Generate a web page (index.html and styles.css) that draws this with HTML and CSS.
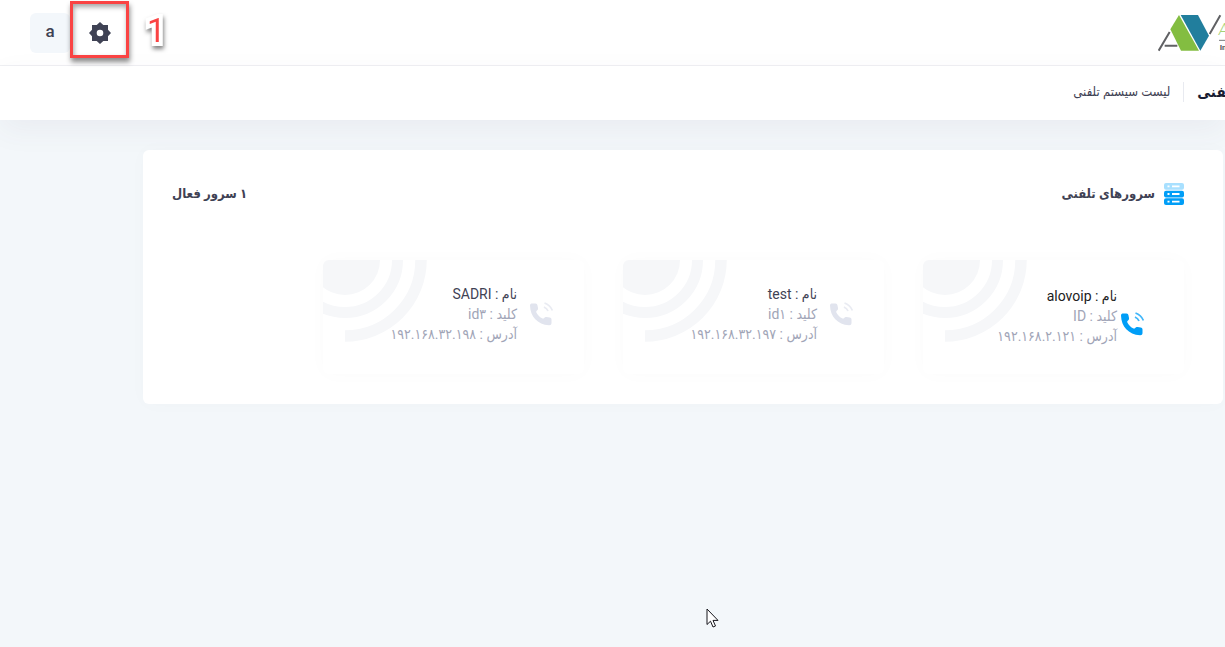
FILE: index.html
```html
<!DOCTYPE html>
<html lang="fa" dir="rtl">
<head>
<meta charset="utf-8">
<title>لیست سیستم تلفنی</title>
<link rel="stylesheet" href="styles.css">
</head>
<body>
<svg class="defs" aria-hidden="true">
  <symbol id="phone" viewBox="0 0 24 24">
    <path d="M1 3.500C1 2 2 1.500 3.200 1.500H6.500C7.700 1.500 8.300 2.300 8.500 3.400L9 6C9.200 7.200 8.800 7.900 8 8.500C7.200 9.100 7 9.700 7.400 10.600C8.600 13.200 10.500 15 13 16.300C13.900 16.800 14.700 16.700 15.200 16C15.800 15.100 16.500 14.800 17.600 15L20.600 15.500C22 15.700 22.500 16.500 22.500 17.600V21C22.500 22.600 21.500 23.300 20 23.200C8.500 22.600 1.300 14.500 1 3.500Z"/>
    <path d="M15.500 1C19.500 2.500 22 5 23.400 8.500M15 5C17 6 18.300 7.200 19 9" fill="none" stroke="currentColor" stroke-width="1.700" opacity=".75"/>
  </symbol>
  <symbol id="rings" viewBox="0 0 104 82">
    <circle cx="22" cy="0" r="35"/>
    <circle cx="22" cy="0" r="52.500" fill="none" stroke="currentColor" stroke-width="11"/>
    <path d="M98 0A76 76 0 0 1 22 76" fill="none" stroke="currentColor" stroke-width="11.500"/>
  </symbol>
</svg>

<header class="topbar">
  <a class="logo" href="#" aria-label="Alovoip">
    <svg viewBox="339 42 201 114" aria-hidden="true">
      <path d="M402 45L462 152H408L376 88Z" fill="#83bd41"/>
      <path d="M407 45H459L492 107L466 152Z" fill="#217e9d"/>
      <path d="M341 152L374 96M359 137H397M494 102L526 46" fill="none" stroke="#606164" stroke-width="6"/>
      <path d="M522 121H540" stroke="#77787a" stroke-width="3"/>
      <text class="logo-name" x="521" y="104">A</text>
      <text class="logo-tag" x="524" y="150">In</text>
    </svg>
  </a>
  <div class="tools">
    <button class="tool" type="button" aria-label="تنظیمات">
      <svg class="gear" viewBox="0 0 22 22" aria-hidden="true">
        <path fill-rule="evenodd" d="M11 0L14.300 3H19V7.700L22 11L19 14.300V19H14.300L11 22L7.700 19H3V14.300L0 11L3 7.700V3H7.700ZM11 7.700A3.300 3.300 0 1 0 11 14.300A3.300 3.300 0 1 0 11 7.700Z"/>
      </svg>
    </button>
    <button class="tool tool-user" type="button">a</button>
  </div>
</header>

<nav class="subheader">
  <h1 class="title">سیستم تلفنی</h1>
  <a class="crumb" href="#">لیست سیستم تلفنی</a>
</nav>

<main class="content">
  <section class="panel">
    <div class="panel-head">
      <h2 class="heading">
        <svg class="servers" viewBox="0 0 20 22" aria-hidden="true">
          <g fill="#a8e0ff"><rect width="20" height="6.700" rx="2"/></g>
          <g fill="#009ef7"><rect y="7.700" width="20" height="6.700" rx="2"/><rect y="15.300" width="20" height="6.700" rx="2"/></g>
          <path d="M8 3.400H15.500M8 11H15.500M8 18.600H15.500M3.500 3.400H5.500M3.500 11H5.500M3.500 18.600H5.500" stroke="#fff" stroke-width="1.800"/>
        </svg>
        سرورهای تلفنی
      </h2>
      <span class="heading">۱ سرور فعال</span>
    </div>
    <div class="tiles">
      <article class="tile tile-active">
        <svg class="rings" aria-hidden="true"><use href="#rings"/></svg>
        <svg class="phone" aria-hidden="true"><use href="#phone"/></svg>
        <div class="info">
          <p class="name">نام : <bdi>alovoip</bdi></p>
          <p>کلید : <bdi>ID</bdi></p>
          <p>آدرس : <bdi dir="ltr">۱۹۲.۱۶۸.۲.۱۲۱</bdi></p>
        </div>
      </article>
      <article class="tile">
        <svg class="rings" aria-hidden="true"><use href="#rings"/></svg>
        <svg class="phone" aria-hidden="true"><use href="#phone"/></svg>
        <div class="info">
          <p class="name">نام : <bdi>test</bdi></p>
          <p>کلید : <bdi dir="ltr">id۱</bdi></p>
          <p>آدرس : <bdi dir="ltr">۱۹۲.۱۶۸.۳۲.۱۹۷</bdi></p>
        </div>
      </article>
      <article class="tile">
        <svg class="rings" aria-hidden="true"><use href="#rings"/></svg>
        <svg class="phone" aria-hidden="true"><use href="#phone"/></svg>
        <div class="info">
          <p class="name">نام : <bdi>SADRI</bdi></p>
          <p>کلید : <bdi dir="ltr">id۳</bdi></p>
          <p>آدرس : <bdi dir="ltr">۱۹۲.۱۶۸.۳۲.۱۹۸</bdi></p>
        </div>
      </article>
    </div>
  </section>
</main>

<div class="callout-box"></div>
<span class="callout-number">1</span>
<svg class="cursor" viewBox="0 0 13 20" aria-hidden="true">
  <path d="M1 1V16.500L4.500 13.200L7 19L9.500 18L7 12.400H12Z" fill="#fff" stroke="#16161c"/>
</svg>
</body>
</html>
```
FILE: styles.css
```css
* {
  box-sizing: border-box;
}

body {
  margin: 0;
  min-height: 100vh;
  overflow: hidden;
  background: #f3f7fa;
  color: #3f4254;
  font: 14px/20px Roboto, "DejaVu Sans Condensed", "DejaVu Sans", sans-serif;
}

h1,
h2,
p {
  margin: 0;
}

a {
  color: inherit;
  text-decoration: none;
}

.defs {
  position: absolute;
  width: 0;
  height: 0;
}

.topbar {
  display: flex;
  justify-content: space-between;
  align-items: center;
  height: 66px;
  padding-left: 30px;
  background: #fff;
  border-bottom: 1px solid #eff0f3;
}

.logo svg {
  display: block;
  width: 67px;
  height: 38px;
}

.logo-name {
  font: italic 300 48px Roboto, sans-serif;
  fill: #a5d277;
  direction: ltr;
}

.logo-tag {
  font: 700 24px Roboto, sans-serif;
  fill: #55565a;
  direction: ltr;
}

.tools {
  display: flex;
  gap: 10px;
}

.tool {
  display: flex;
  align-items: center;
  justify-content: center;
  width: 40px;
  height: 40px;
  padding: 0;
  border: 0;
  border-radius: 6px;
  background: none;
  color: #3f4254;
}

.tool-user {
  padding-bottom: 4px;
  background: #f3f7fb;
  font: 500 17px Roboto, sans-serif;
}

.gear {
  width: 22px;
  height: 22px;
  fill: currentColor;
}

.subheader {
  display: flex;
  align-items: center;
  height: 54px;
  padding-bottom: 2px;
  background: #fff;
  box-shadow: 0 10px 30px rgba(82, 63, 105, 0.06);
}

.title {
  margin-right: -64px;
  padding-left: 13px;
  border-left: 1px solid #e8eaf0;
  color: #181c32;
  font-size: 15px;
  font-weight: 700;
  white-space: nowrap;
}

.crumb {
  padding-right: 13px;
  font-size: 13px;
}

.content {
  padding: 30px 2px 30px 143px;
}

.panel {
  padding: 30px 39px 30px 29px;
  border-radius: 6px;
  background: #fff;
  box-shadow: 0 0 20px rgba(76, 87, 125, 0.02);
}

.panel-head {
  display: flex;
  justify-content: space-between;
  align-items: center;
  height: 28px;
}

.heading {
  display: flex;
  align-items: center;
  gap: 9px;
  font-size: 13px;
  font-weight: 700;
}

.servers {
  width: 20px;
  height: 22px;
}

.tiles {
  display: grid;
  grid-template-columns: repeat(3, 261px);
  gap: 39px;
  padding-top: 52px;
}

.tile {
  position: relative;
  display: flex;
  align-items: flex-start;
  min-height: 114px;
  padding: 24px 31px 24px 20px;
  border-radius: 6px;
  box-shadow: 0 0 20px rgba(76, 87, 125, 0.02);
}

.tile-active {
  padding-top: 26px;
}

.rings {
  position: absolute;
  top: 0;
  left: 0;
  width: 104px;
  height: 82px;
  border-top-left-radius: 6px;
  color: #f6f7f9;
  fill: currentColor;
}

.phone {
  flex: none;
  width: 24px;
  height: 24px;
  margin: 18px 0 0 12px;
  color: #e1e4ee;
  fill: currentColor;
}

.tile-active .phone {
  margin: 26px 9px 0 3px;
  color: #009ef7;
}

.info {
  position: relative;
  color: #a1a5b7;
  white-space: nowrap;
}

.name {
  color: #3f4254;
}

.tile-active .name {
  color: #212121;
}

.callout-box {
  position: absolute;
  top: 1px;
  left: 70px;
  width: 59px;
  height: 57px;
  border: 3px solid #fa4343;
  box-shadow: 1px 4px 5px rgba(0, 0, 0, 0.45), inset 1px 3px 5px rgba(0, 0, 0, 0.35);
}

.callout-number {
  position: absolute;
  top: 13px;
  left: 147px;
  color: #fa4343;
  font: 400 33px/36px Roboto, sans-serif;
  -webkit-text-stroke: 8px #fff;
  stroke-linejoin: round;
  paint-order: stroke fill;
  filter: drop-shadow(1px 3px 2px rgba(0, 0, 0, 0.5));
}

.cursor {
  position: absolute;
  top: 608px;
  left: 706px;
  width: 13px;
  height: 20px;
}
```
